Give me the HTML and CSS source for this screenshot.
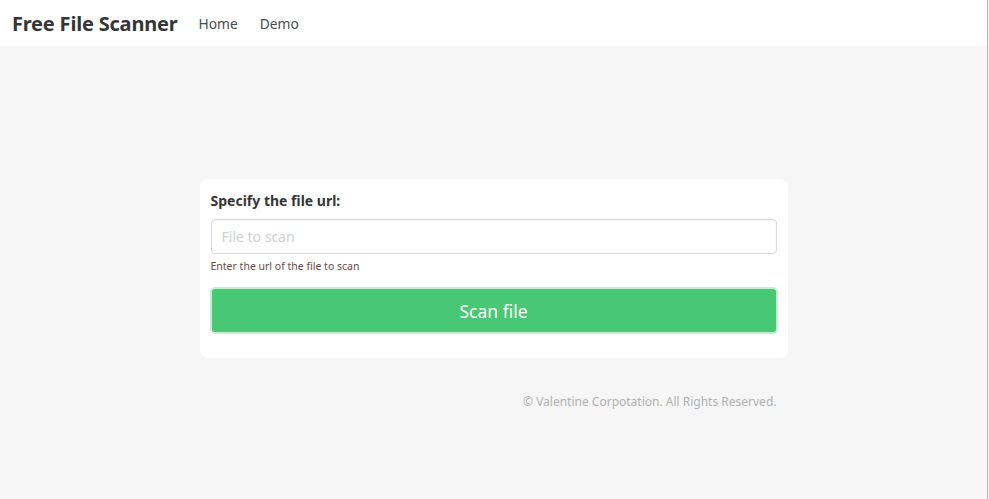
FILE: index.html
```html
<!DOCTYPE html>
<html lang="en">
<head>
<meta charset="utf-8">
<title>Free File Scanner</title>
<link rel="stylesheet" href="styles.css">
</head>
<body>
<div class="page">
  <nav class="navbar">
    <a class="brand" href="#">Free File Scanner</a>
    <a class="nav-link" href="#">Home</a>
    <a class="nav-link" href="#">Demo</a>
  </nav>
  <main class="main">
    <form class="card">
      <label class="label" for="file">Specify the file url:</label>
      <input class="input" id="file" type="text" placeholder="File to scan">
      <p class="help">Enter the url of the file to scan</p>
      <button class="button" type="button">Scan file</button>
    </form>
    <p class="footer">© Valentine Corpotation. All Rights Reserved.</p>
  </main>
</div>
</body>
</html>
```

FILE: styles.css
```css
html, body {
  margin: 0;
  padding: 0;
  height: 100%;
}
body {
  font-family: "Noto Sans", "Open Sans", sans-serif;
  background: #f6f6f6;
  color: #363636;
}
.page {
  width: 987px;
  min-height: 100%;
  border-right: 1px solid #bdb5ad;
  display: flex;
  flex-direction: column;
}
.navbar {
  height: 46px;
  background: #fff;
  display: flex;
  align-items: center;
  padding-left: 12px;
}
.brand {
  font-size: 20px;
  font-weight: 700;
  color: #363636;
  text-decoration: none;
  margin-right: 21px;
  letter-spacing: -0.2px;
}
.nav-link {
  font-size: 13.8px;
  color: #4a4a4a;
  text-decoration: none;
  margin-right: 22px;
}
.main {
  display: flex;
  flex-direction: column;
  align-items: center;
  padding-top: 133px;
}
.card {
  width: 566px;
  background: #fff;
  border-radius: 8px;
  padding: 12px 11px 24px 11px;
  display: flex;
  flex-direction: column;
}
.label {
  font-size: 14px;
  font-weight: 700;
  color: #363636;
  line-height: 20px;
  margin-bottom: 8px;
}
.input {
  height: 35px;
  box-sizing: border-box;
  border: 1px solid #dbdbdb;
  border-radius: 4px;
  padding: 0 10px;
  font-family: inherit;
  font-size: 14px;
  color: #363636;
  box-shadow: inset 0 1px 2px rgba(10,10,10,0.05);
}
.input::placeholder {
  color: #d0d0d0;
}
.help {
  margin: 5px 0 0 0;
  font-size: 10.5px;
  line-height: 14px;
  color: #6b4a4a;
}
.button {
  margin: 14px -1px 0 -1px;
  height: 47px;
  box-sizing: border-box;
  background: #48c774;
  border: 2px solid #c2efd4;
  border-radius: 5px;
  color: #fff;
  font-family: inherit;
  font-size: 17.5px;
  cursor: pointer;
}
.footer {
  width: 566px;
  text-align: right;
  margin: 35px 0 0 0;
  font-size: 12px;
  color: #b0b0b0;
}
```
